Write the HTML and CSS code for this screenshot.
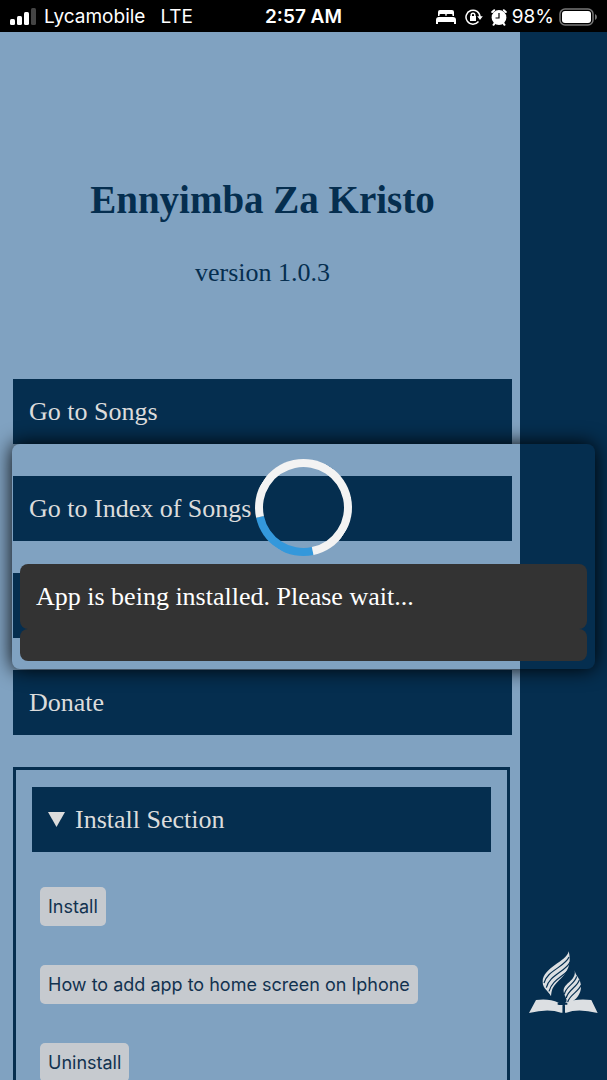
FILE: index.html
```html
<!DOCTYPE html>
<html lang="lg">
<head>
<meta charset="utf-8">
<meta name="viewport" content="width=device-width, initial-scale=1">
<title>Ennyimba Za Kristo</title>
<link rel="stylesheet" href="styles.css">
</head>
<body>
<div class="status">
  <div class="status-left">
    <svg class="signal" viewBox="0 0 27 18" aria-hidden="true"><g fill="#fff"><rect x="0" y="11" width="5" height="6" rx="1.5"/><rect x="7" y="8" width="5" height="9" rx="1.5"/><rect x="14" y="4" width="5" height="13" rx="1.5"/><rect x="21" y="0" width="5" height="17" rx="1.5" fill="#444"/></g></svg>
    <span>Lycamobile</span><span class="network">LTE</span>
  </div>
  <div class="clock">2:57 AM</div>
  <div class="status-right">
    <svg class="bed" viewBox="0 0 20 14" aria-hidden="true"><path fill="#fff" d="M2 6V2Q2 0 4 0h12q2 0 2 2v4h-1.500V5q0-1-1-1h-4q-1 0-1 1v1h-1V5q0-1-1-1h-4q-1 0-1 1v1zM0 10q0-3 3-3h14q3 0 3 3v4h-2v-2H2v2H0z"/></svg>
    <svg class="lock" viewBox="0 0 18 16" aria-hidden="true"><g fill="none" stroke="#fff" stroke-width="1.500"><path d="M13.500 12.500A7 7 0 1 1 15 8"/><path d="M6.200 7.500V6q0-1.800 1.800-1.800t1.800 1.800v1.500"/></g><path fill="#fff" d="M12.200 7.200h5.600L15 11zM5 7h6v5H5z"/></svg>
    <svg class="alarm" viewBox="0 0 16 17" aria-hidden="true"><circle cx="8" cy="8.500" r="7.400" fill="#fff"/><path stroke="#fff" stroke-width="2" stroke-linecap="round" d="M1.200 3 3.200 1.200M14.800 3l-2-1.800M2.500 15.800l1.500-2M13.500 15.800l-1.500-2"/><path fill="none" stroke="#000" stroke-width="1.200" d="M8 4v5H4.500"/></svg>
    <span>98%</span>
    <svg class="battery" viewBox="0 0 38 18" aria-hidden="true"><rect x="1" y="1" width="33" height="16" rx="5" fill="none" stroke="#777" stroke-width="1.500"/><rect x="3" y="3" width="29" height="12" rx="3" fill="#fff"/><path fill="#777" d="M36 6q2 1 2 3t-2 3z"/></svg>
  </div>
</div>

<div class="app">
  <main class="content">
    <header class="intro">
      <h1>Ennyimba Za Kristo</h1>
      <p>version 1.0.3</p>
    </header>
    <nav class="links">
      <a class="bar" href="#songs">Go to Songs</a>
      <a class="bar" href="#index">Go to Index of Songs</a>
      <a class="bar" href="#more"></a>
      <a class="bar" href="#donate">Donate</a>
    </nav>
    <details class="install" open>
      <summary class="bar"><svg class="marker" viewBox="0 0 17 15" aria-hidden="true"><path fill="#dcdcdc" d="M0 0h17L8.500 15z"/></svg>Install Section</summary>
      <div class="actions">
        <button type="button">Install</button>
        <button type="button">How to add app to home screen on Iphone</button>
        <button type="button">Uninstall</button>
      </div>
    </details>
  </main>
  <aside class="side">
    <svg class="logo" viewBox="43 33 207 187" aria-hidden="true">
      <g fill="#dcdfe2">
        <path d="M64 179Q101 173 132 187V194H151V187Q187 173 230 179L249 218Q190 203 155 217H151V195H144V217H139Q101 203 43 218Z"/>
        <path d="M162 33C156 64 84 82 84 124C84 146 101 150 109 168C111 150 112 144 123 131C140 112 176 88 162 33Z"/>
        <path d="M180 90C186 122 145 128 147 154C148 168 160 172 154 188C166 190 180 180 188 170C196 159 201 147 198 130C195 112 183 107 180 90Z"/>
      </g>
      <g fill="none" stroke="#052e4f" stroke-width="3.500">
        <path d="M163 50C152 78 96 92 88 128"/>
        <path d="M166 65C155 93 103 104 95 142"/>
        <path d="M166 83C153 106 112 116 103 153"/>
        <path d="M186 108C181 131 153 137 149 162"/>
        <path d="M194 119C187 141 159 149 155 173"/>
        <path d="M199 135C191 155 166 162 159 185"/>
        <path d="M147 178V219M129 190H158" stroke-width="6"/>
      </g>
    </svg>
  </aside>
</div>

<div class="dialog" role="dialog" aria-label="Installation">
  <div class="spinner"></div>
  <div class="messages">
    <p class="message">App is being installed. Please wait...</p>
    <p class="message"></p>
  </div>
</div>
</body>
</html>
```
FILE: styles.css
```css
* { box-sizing: border-box; }

body {
  margin: 0;
  height: 100vh;
  overflow: hidden;
  display: flex;
  flex-direction: column;
  background: #052e4f;
  color: #052e4f;
  font-family: "Liberation Serif", "Times New Roman", serif;
  font-size: 26px;
  line-height: 33px;
}

h1, p { margin: 0; }

.status {
  flex: none;
  height: 32px;
  display: grid;
  grid-template-columns: 1fr auto 1fr;
  align-items: center;
  padding: 0 10px;
  background: #000;
  color: #fff;
  font: 19px/34px Inter, sans-serif;
}
.status-left, .status-right { display: flex; align-items: center; }
.status-left { gap: 7px; }
.status-right { justify-content: flex-end; gap: 5px; }
.network { margin-left: 8px; }
.clock { font-weight: 600; }
.signal { width: 27px; height: 18px; }
.bed { width: 20px; height: 14px; margin-right: 4px; }
.lock { width: 18px; height: 16px; margin-right: 3px; }
.alarm { width: 16px; height: 17px; }
.battery { width: 38px; height: 18px; }

.app {
  flex: 1;
  min-height: 0;
  display: grid;
  grid-template-columns: 1fr 87px;
}

.content {
  overflow: hidden;
  padding: 144px 8px 0 13px;
  background: #80a2c1;
}

.intro {
  display: flex;
  flex-direction: column;
  gap: 32px;
  padding-bottom: 90px;
  text-align: center;
}
.intro h1 { font-size: 39px; line-height: 48px; }

.links { display: flex; flex-direction: column; gap: 32px; }

.bar {
  display: block;
  min-height: 65px;
  padding: 16px;
  background: #052e4f;
  color: #dcdcdc;
  text-decoration: none;
}

.install {
  height: 400px;
  margin: 32px 2px 0 0;
  padding: 17px 16px;
  border: 3px solid #052e4f;
}
summary.bar { display: flex; align-items: center; gap: 10px; }
.marker { width: 17px; height: 15px; }

.actions {
  display: flex;
  flex-direction: column;
  align-items: flex-start;
  gap: 39px;
  padding: 35px 8px;
}
.actions button {
  height: 39px;
  padding: 0 8px;
  border: 0;
  border-radius: 5px;
  background: #c6cacf;
  color: #12324f;
  font: 18px/39px Inter, sans-serif;
}

.side {
  display: flex;
  align-items: flex-end;
  justify-content: center;
  padding: 0 0 66px;
}
.logo { width: 69px; height: 63px; }

.dialog {
  position: fixed;
  top: 444px;
  left: 12px;
  right: 12px;
  display: flex;
  flex-direction: column;
  align-items: center;
  gap: 8px;
  padding: 15px 8px 8px;
  border-radius: 8px;
  box-shadow: 0 0 20px #000;
}
.spinner {
  width: 97px;
  height: 97px;
  border: 8px solid #f3f3f3;
  border-bottom-color: #3498db;
  border-radius: 50%;
  transform: rotate(33deg);
}
.messages { align-self: stretch; }
.message {
  min-height: 32px;
  padding: 16px;
  border-radius: 8px;
  background: #333;
  color: #fff;
}
```
